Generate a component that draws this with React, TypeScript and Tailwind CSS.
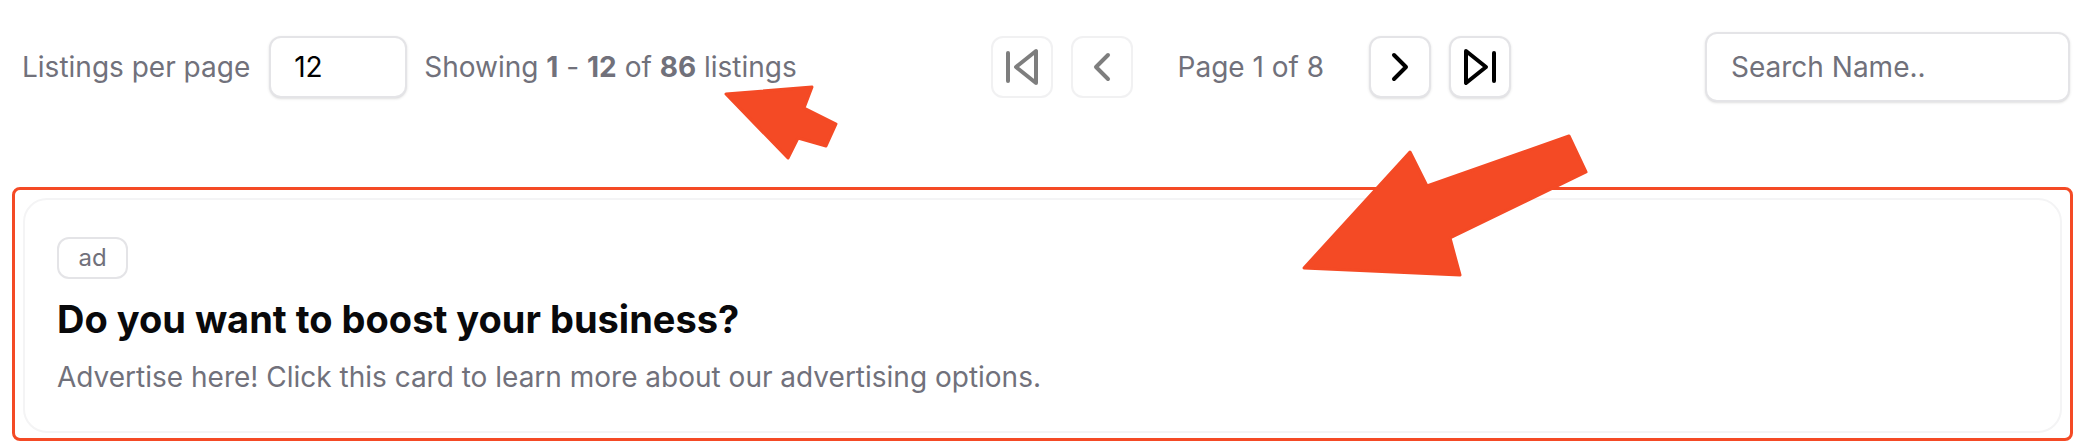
import React from 'react'
import { ChevronLeft, ChevronRight } from 'lucide-react'

const SkipBackIcon = () => (
  <svg viewBox="0 0 24 24" className="h-12 w-12" fill="none" stroke="currentColor" strokeWidth={2} strokeLinecap="round" strokeLinejoin="round">
    <polygon points="19 20 9 12 19 4 19 20" />
    <line x1="5" y1="19" x2="5" y2="5" />
  </svg>
)

const SkipForwardIcon = () => (
  <svg viewBox="0 0 24 24" className="h-12 w-12" fill="none" stroke="currentColor" strokeWidth={2} strokeLinecap="round" strokeLinejoin="round">
    <polygon points="5 4 15 12 5 20 5 4" />
    <line x1="19" y1="5" x2="19" y2="19" />
  </svg>
)

const PageButton = ({ disabled, children }: { disabled?: boolean; children: React.ReactNode }) => (
  <button
    disabled={disabled}
    className={
      disabled
        ? 'flex h-[62px] w-[62px] items-center justify-center rounded-xl border-2 border-zinc-200 bg-white text-black opacity-50'
        : 'flex h-[62px] w-[62px] items-center justify-center rounded-xl border-2 border-zinc-200 bg-white text-black shadow-sm'
    }
  >
    {children}
  </button>
)

// annotation arrows drawn over the screenshot
const Arrows = () => (
  <svg className="pointer-events-none absolute left-0 top-0" width="2090" height="446" viewBox="0 0 2090 446">
    <polygon
      points="726,94 812,87 804,108 836,124 826,146 798,138 788,158"
      fill="#f44a25"
      stroke="#f44a25"
      strokeWidth={3}
      strokeLinejoin="round"
    />
    <polygon
      points="1304,268 1410,152 1427,186 1569,136 1586,172 1450,238 1460,275"
      fill="#f44a25"
      stroke="#f44a25"
      strokeWidth={3}
      strokeLinejoin="round"
    />
  </svg>
)

const App = () => {
  return (
    <div className="relative min-h-[446px] bg-white font-['Inter',sans-serif]">
      <div className="flex items-center justify-between pl-[22px] pr-5 pt-8">
        <div className="flex items-center">
          <span className="text-[28px] text-zinc-500">Listings per page</span>
          <input
            defaultValue="12"
            className="ml-[19px] h-[62px] w-[138px] rounded-xl border-2 border-zinc-200 bg-white pl-[23px] text-[28px] text-black shadow-sm outline-none"
          />
          <span className="ml-[17px] text-[28px] text-zinc-500">
            Showing <b>1</b> - <b>12</b> of <b>86</b> listings
          </span>
        </div>

        <div className="flex items-center gap-[18px]">
          <PageButton disabled>
            <SkipBackIcon />
          </PageButton>
          <PageButton disabled>
            <ChevronLeft size={48} strokeWidth={2} />
          </PageButton>
          <span className="px-[27px] text-[28px] text-zinc-500">Page 1 of 8</span>
          <PageButton>
            <ChevronRight size={48} strokeWidth={2} />
          </PageButton>
          <PageButton>
            <SkipForwardIcon />
          </PageButton>
        </div>

        <input
          placeholder="Search Name.."
          className="h-[70px] w-[365px] rounded-xl border-2 border-zinc-200 bg-white pl-[24px] text-[28px] text-black shadow-sm outline-none placeholder:text-zinc-500"
        />
      </div>

      <div className="ml-3 mr-[17px] mt-[85px] rounded-lg border-[3px] border-[#f44a25] px-2 pb-[5px] pt-2">
        <div className="rounded-3xl border-2 border-zinc-100 bg-white px-8 pb-[34px] pt-[37px]">
          <span className="inline-flex h-[42px] w-[71px] items-center justify-center rounded-xl border-2 border-zinc-200 text-[24px] text-zinc-500">
            ad
          </span>
          <h2 className="mt-[18px] text-[38px] font-bold leading-[44px] text-zinc-950">
            Do you want to boost your business?
          </h2>
          <p className="mt-4 text-[28px] leading-[40px] text-zinc-500">
            Advertise here! Click this card to learn more about our advertising options.
          </p>
        </div>
      </div>

      <Arrows />
    </div>
  )
}

export default App
